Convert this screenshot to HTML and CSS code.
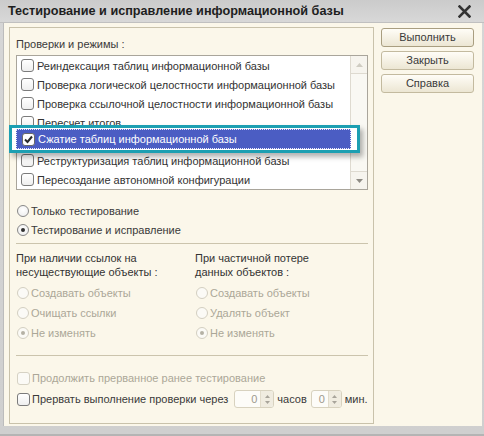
FILE: index.html
```html
<!DOCTYPE html>
<html lang="ru">
<head>
<meta charset="utf-8">
<title>Тестирование и исправление информационной базы</title>
<link rel="stylesheet" href="styles.css">
</head>
<body>
<div class="window">
  <div class="titlebar">
    <span class="title">Тестирование и исправление информационной базы</span>
    <svg class="close" width="13" height="13" viewBox="0 0 13 13"><path d="M1.5 1.5L11.5 11.5M11.5 1.5L1.5 11.5" stroke="#333" stroke-width="2.6" stroke-linecap="square"/></svg>
  </div>
  <div class="client">
    <div class="group">
      <div class="caption">Проверки и режимы :</div>
      <div class="listbox">
        <div class="rows">
          <div class="row"><span class="cb"></span><span>Реиндексация таблиц информационной базы</span></div>
          <div class="row"><span class="cb"></span><span>Проверка логической целостности информационной базы</span></div>
          <div class="row"><span class="cb"></span><span>Проверка ссылочной целостности информационной базы</span></div>
          <div class="row"><span class="cb"></span><span>Пересчет итогов</span></div>
          <div class="row sel">
            <div class="callout">
              <div class="bar"><span class="cb on"><svg width="11" height="11" viewBox="0 0 11 11"><path d="M2 5.5L4.5 8L9 2.5" fill="none" stroke="#2a2a2a" stroke-width="2"/></svg></span><span>Сжатие таблиц информационной базы</span></div>
            </div>
          </div>
          <div class="row"><span class="cb"></span><span>Реструктуризация таблиц информационной базы</span></div>
          <div class="row"><span class="cb"></span><span>Пересоздание автономной конфигурации</span></div>
        </div>
        <div class="scrollbar">
          <div class="sb-btn up"><svg width="7" height="4" viewBox="0 0 7 4"><path d="M0 4L3.5 0L7 4Z" fill="#cfccc2"/></svg></div>
          <div class="sb-track"></div>
          <div class="sb-btn down"><svg width="7" height="4" viewBox="0 0 7 4"><path d="M0 0L3.5 4L7 0Z" fill="#8e8b84"/></svg></div>
        </div>
      </div>

      <div class="modes">
        <div class="opt"><span class="rb"></span><span>Только тестирование</span></div>
        <div class="opt"><span class="rb on"></span><span>Тестирование и исправление</span></div>
      </div>

      <div class="sep"></div>

      <div class="cols">
        <div class="col">
          <div class="lbl">При наличии ссылок на<br>несуществующие объекты :</div>
          <div class="dis">
            <div class="opt"><span class="rb"></span><span>Создавать объекты</span></div>
            <div class="opt"><span class="rb"></span><span>Очищать ссылки</span></div>
            <div class="opt"><span class="rb on"></span><span>Не изменять</span></div>
          </div>
        </div>
        <div class="col">
          <div class="lbl">При частичной потере<br>данных объектов :</div>
          <div class="dis">
            <div class="opt"><span class="rb"></span><span>Создавать объекты</span></div>
            <div class="opt"><span class="rb"></span><span>Удалять объект</span></div>
            <div class="opt"><span class="rb on"></span><span>Не изменять</span></div>
          </div>
        </div>
      </div>

      <div class="sep sep2"></div>

      <div class="checks">
        <div class="chk dis"><span class="cb"></span><span>Продолжить прерванное ранее тестирование</span></div>
        <div class="chk tall">
          <span class="cb"></span><span>Прервать выполнение проверки через</span>
          <span class="spin s1"><span class="val">0</span><span class="arrows"><svg width="5" height="3" viewBox="0 0 5 3"><path d="M0 3L2.5 0L5 3Z" fill="#a8a49a"/></svg><svg width="5" height="3" viewBox="0 0 5 3"><path d="M0 0L2.5 3L5 0Z" fill="#a8a49a"/></svg></span></span>
          <span class="unit">часов</span>
          <span class="spin s2"><span class="val">0</span><span class="arrows"><svg width="5" height="3" viewBox="0 0 5 3"><path d="M0 3L2.5 0L5 3Z" fill="#a8a49a"/></svg><svg width="5" height="3" viewBox="0 0 5 3"><path d="M0 0L2.5 3L5 0Z" fill="#a8a49a"/></svg></span></span>
          <span class="unit">мин.</span>
        </div>
      </div>
    </div>

    <div class="buttons">
      <button class="btn default">Выполнить</button>
      <button class="btn">Закрыть</button>
      <button class="btn">Справка</button>
    </div>
  </div>
</div>
</body>
</html>
```

FILE: styles.css
```css
* { box-sizing: border-box; }
html, body { margin: 0; padding: 0; }
body {
  width: 484px;
  height: 436px;
  overflow: hidden;
  font-family: "Liberation Sans", Arial, sans-serif;
  font-size: 11px;
  color: #3a3a3a;
  background: #d4d4d4;
}
.window {
  position: relative;
  width: 484px;
  height: 436px;
  display: flex;
  flex-direction: column;
  background: linear-gradient(#d6d6d6, #cfcfcf);
  border-bottom: 2px solid #b4b4b4;
}
.titlebar {
  height: 23px;
  flex: none;
  display: flex;
  align-items: center;
  justify-content: space-between;
  padding: 0 13px 0 8px;
  background: linear-gradient(#cbcbcb, #d8d8d8);
  border-bottom: 1px solid #c0c0c0;
}
.title {
  font-weight: bold;
  font-size: 12.66px;
  color: #1e1e1e;
}
.close { display: block; }
.client {
  flex: 1;
  display: flex;
  gap: 7px;
  margin: 0 2px 8px 3px;
  padding: 4px 8px 2px 5px;
  background: #fbf7ea;
  border-left: 1px solid #bcbcbc;
}
.group {
  width: 365px;
  flex: none;
  border: 1px solid #c9c2ab;
  padding: 9px 5px 0 6px;
}
.caption {
  line-height: 15px;
  margin-bottom: 3px;
}
.listbox {
  position: relative;
  display: flex;
  height: 135px;
  border: 1px solid #a9a59b;
  background: #fff;
}
.rows { flex: 1; }
.row {
  height: 19px;
  display: flex;
  align-items: center;
  gap: 3px;
  padding-left: 4px;
  white-space: nowrap;
  color: #333;
}
.row.sel { position: relative; }
.cb {
  width: 13px;
  height: 13px;
  flex: none;
  border: 1px solid #7b7b7b;
  border-radius: 3px;
  background: linear-gradient(#ffffff, #efefef);
  display: flex;
  align-items: center;
  justify-content: center;
}
.cb.on { background: #fff; border-color: #6a6a6a; }
.callout {
  position: absolute;
  left: -8px;
  top: -7px;
  width: 351px;
  height: 28px;
  border: 3px solid #1c9fb2;
  background: #fff;
  padding: 1px 6px 1px 4px;
  box-shadow: 3px 4px 5px rgba(0, 0, 0, 0.3);
  z-index: 2;
}
.bar {
  height: 20px;
  display: flex;
  align-items: center;
  gap: 3px;
  padding-left: 5px;
  background: #4b5dc3;
  border: 1px dotted #e8ebff;
  color: #fff;
  white-space: nowrap;
}
.scrollbar {
  width: 17px;
  flex: none;
  display: flex;
  flex-direction: column;
  border-left: 1px solid #dedad0;
  background: #f9f8f3;
}
.sb-btn {
  height: 18px;
  flex: none;
  display: flex;
  align-items: center;
  justify-content: center;
  border-bottom: 1px solid #dedad0;
  background: #f6f4ee;
}
.sb-btn.down {
  border-bottom: 0;
  border-top: 1px solid #dedad0;
}
.sb-track { flex: 1; }

.modes { margin-top: 11px; }
.opt {
  height: 19px;
  display: flex;
  align-items: center;
  gap: 2px;
  padding-left: 1px;
  white-space: nowrap;
}
.rb {
  width: 12px;
  height: 12px;
  flex: none;
  border-radius: 50%;
  border: 1px solid #878787;
  background: radial-gradient(circle at 50% 40%, #ffffff, #ebebeb);
  display: flex;
  align-items: center;
  justify-content: center;
}
.rb.on::after {
  content: "";
  width: 4px;
  height: 4px;
  border-radius: 50%;
  background: #303030;
}
.sep {
  height: 1px;
  background: #cbc4ad;
  margin-top: 4px;
}
.sep2 { margin-top: 12px; }
.cols {
  display: grid;
  grid-template-columns: 179px 1fr;
  margin-top: 7px;
}
.lbl {
  line-height: 14px;
  margin-bottom: 4px;
  color: #333;
}
.dis .opt { height: 20px; color: #aba798; }
.dis .rb { border-color: #d3cfc1; background: #fbfaf6; }
.dis .rb.on::after { background: #b5b1a5; }

.checks { margin-top: 12px; }
.chk {
  height: 20px;
  display: flex;
  align-items: center;
  gap: 2px;
  padding-left: 1px;
  white-space: nowrap;
}
.chk.dis { color: #aba798; }
.chk.dis .cb { border-color: #d6d2c4; background: #fbfaf6; }
.chk.tall { height: 22px; }
.spin {
  display: flex;
  height: 18px;
  flex: none;
  border: 1px solid #d8d2bf;
  border-radius: 3px;
  background: #fdfcf8;
}
.s1 { width: 40px; margin-left: 4px; }
.s2 { width: 31px; margin-left: 2px; }
.spin .val {
  flex: 1;
  text-align: right;
  padding-right: 3px;
  line-height: 16px;
  color: #9e9a8e;
}
.spin .arrows {
  width: 13px;
  flex: none;
  display: flex;
  flex-direction: column;
  align-items: center;
  justify-content: center;
  gap: 3px;
  border-left: 1px solid #e2dccb;
  background: #f0ece0;
  border-radius: 0 2px 2px 0;
}
.spin .arrows svg { display: block; }
.unit { margin-left: 1px; }

.buttons {
  width: 93px;
  flex: none;
  display: flex;
  flex-direction: column;
  gap: 4px;
  padding-top: 1px;
}
.btn {
  height: 19px;
  padding: 0;
  border: 1px solid #c3ba9f;
  border-radius: 3px;
  background: linear-gradient(#fffdf7, #ece6d3);
  font-family: inherit;
  font-size: 11px;
  line-height: 17px;
  color: #3a3a3a;
  text-align: center;
}
.btn.default { border-color: #a99e80; }
```
